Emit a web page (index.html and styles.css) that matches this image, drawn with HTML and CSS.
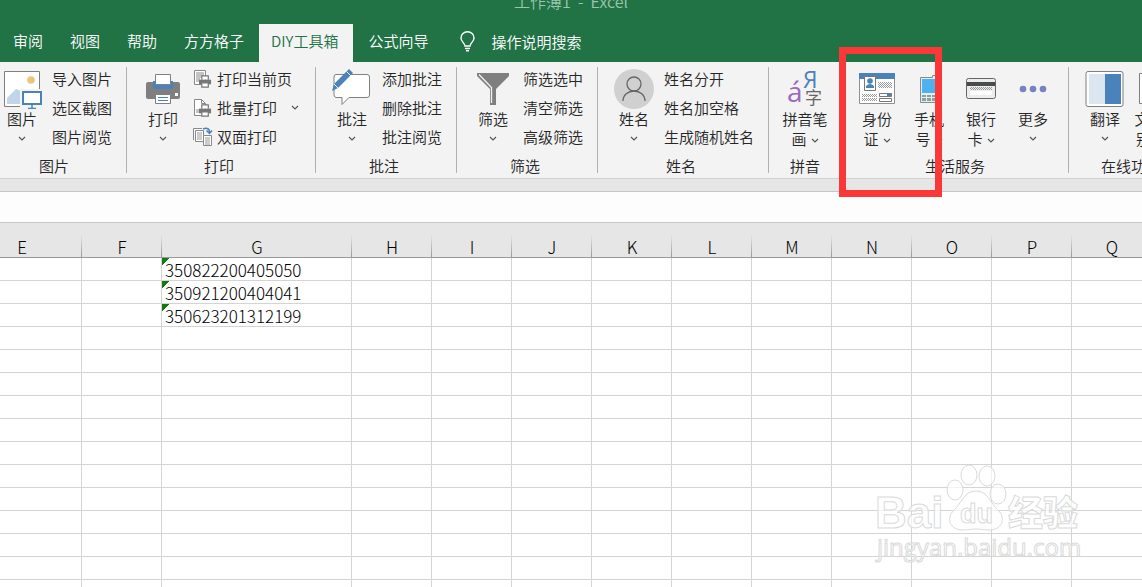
FILE: index.html
```html
<!DOCTYPE html>
<html lang="zh-CN">
<head>
  <meta charset="utf-8">
  <title>工作薄1 - Excel</title>
  <link rel="stylesheet" href="styles.css">
</head>
<body>
  <svg class="defs" width="0" height="0">
    <symbol id="chevron" viewBox="0 0 8 5"><path d="M1 1l3 3 3-3" fill="none" stroke="#555" stroke-width="1.2"/></symbol>
    <symbol id="printer" viewBox="0 0 16 14">
      <path d="M4 5V1h7v4" fill="#fff" stroke="#777" stroke-width="1.3"/>
      <path d="M1 5h13v5H1z" fill="#777"/>
      <path d="M4 8.5h7V13H4z" fill="#fff" stroke="#777" stroke-width="1.3"/>
    </symbol>
    <pattern id="dots" width="2" height="2" patternUnits="userSpaceOnUse"><path d="M0 0h1v1H0zM1 1h1v1H1z" fill="#999"/></pattern>
  </svg>

  <header class="titlebar">
    <div class="title">工作薄1 &nbsp;- &nbsp;Excel</div>
    <nav class="tabs">
      <button class="tab">审阅</button>
      <button class="tab">视图</button>
      <button class="tab">帮助</button>
      <button class="tab">方方格子</button>
      <button class="tab active">DIY工具箱</button>
      <button class="tab">公式向导</button>
      <button class="tell-me">
        <svg width="16" height="21" viewBox="0 0 16 21" fill="none" stroke="#fff" stroke-width="1.4">
          <path d="M5 15c0-3-4-4-4-8a6.5 6.2 0 0 1 13 0c0 4-4 5-4 8zM5 17.5h5M6 19.7h3"/>
        </svg>
        操作说明搜索
      </button>
    </nav>
  </header>

  <main class="ribbon">
    <section class="group">
      <div class="tools">
        <button class="big">
          <svg width="40" height="40" viewBox="0 0 40 40">
            <path d="M2.500 2.500h35v35h-35z" fill="#fff" stroke="#808080"/>
            <path d="M5 35V29l9-9 3 1 3 4v10z" fill="#c1d5e8"/>
            <circle cx="29" cy="11" r="3.800" fill="#ecc477"/>
            <path d="M18 20h22v20H18z" fill="#f3f3f3"/>
            <path d="M21 23h18v12H21z" fill="#fff" stroke="#4a82bc" stroke-width="2"/>
            <path d="M30 36v3M26 39.500h8" stroke="#4a82bc" stroke-width="1.500"/>
          </svg>
          <span>图片</span>
          <svg class="arrow"><use href="#chevron"/></svg>
        </button>
        <div class="list">
          <button>导入图片</button>
          <button>选区截图</button>
          <button>图片阅览</button>
        </div>
      </div>
      <div class="group-name">图片</div>
    </section>

    <section class="group">
      <div class="tools">
        <button class="big">
          <svg width="40" height="40" viewBox="0 0 40 40">
            <rect x="3" y="13" width="34" height="17" rx="2" fill="#7f7f7f"/>
            <path d="M10 12h20v8H10z" fill="#4a82bc"/>
            <path d="M12.500 5.500h15v10h-15z" fill="#fff" stroke="#808080"/>
            <path d="M12.500 25.500h15v9h-15z" fill="#fff" stroke="#808080"/>
            <path d="M15 28.500h10M15 31.500h10" stroke="#4a82bc"/>
            <path d="M32 24h3v3h-3z" fill="#fff"/>
          </svg>
          <span>打印</span>
          <svg class="arrow"><use href="#chevron"/></svg>
        </button>
        <div class="list">
          <button>
            <svg width="20" height="20" viewBox="0 0 20 20">
              <path d="M1.500 1.500h11v14h-11z" fill="#fff" stroke="#888"/>
              <path d="M3 4h8M3 6h8M3 8h5M3 10h4M3 12h3" stroke="#888"/>
              <use href="#printer" x="5" y="6" width="15" height="13"/>
            </svg>
            打印当前页
          </button>
          <button>
            <svg width="20" height="20" viewBox="0 0 20 20">
              <path d="M1.500 1.500h7l4 4v12h-11z" fill="#fff" stroke="#888"/>
              <path d="M8.500 1.500v4h4" fill="none" stroke="#888"/>
              <path d="M3 12h3M3 14h3" stroke="#888"/>
              <use href="#printer" x="5" y="6" width="15" height="13"/>
            </svg>
            批量打印
            <svg class="arrow side"><use href="#chevron"/></svg>
          </button>
          <button>
            <svg width="20" height="20" viewBox="0 0 20 20">
              <path d="M.5 13V1.500H9M2.500 3.500h8v11h-8z" fill="#fff" stroke="#888"/>
              <path d="M4 6h5M4 8h5M4 10h5M4 12h5" stroke="#999"/>
              <path d="M10.500 8.500h8v10h-8z" fill="#fff" stroke="#888"/>
              <path d="M12 11h5M12 13h5M12 15h5M12 17h5" stroke="#999"/>
              <path d="M10 2c4-2 7 0 6.500 4M13.500 3.500l3 3 2.500-3" fill="none" stroke="#4a82bc" stroke-width="1.500"/>
            </svg>
            双面打印
          </button>
        </div>
      </div>
      <div class="group-name">打印</div>
    </section>

    <section class="group">
      <div class="tools">
        <button class="big">
          <svg width="40" height="40" viewBox="0 0 40 40">
            <path d="M4 5.500h31q2.500 0 2.500 2.500v18q0 2.500-2.500 2.500H17l-7 7v-7H4q-2-.5-2-2.500V8q0-2.500 2-2.500z" fill="#fff" stroke="#808080"/>
            <path d="M0 22l2-7L17 0l4 4L6 19z" fill="#4a82bc"/>
            <path d="M14.500 2.500l4.500 4.500M2 15l4 4" stroke="#f3f3f3"/>
          </svg>
          <span>批注</span>
          <svg class="arrow"><use href="#chevron"/></svg>
        </button>
        <div class="list">
          <button>添加批注</button>
          <button>删除批注</button>
          <button>批注阅览</button>
        </div>
      </div>
      <div class="group-name">批注</div>
    </section>

    <section class="group">
      <div class="tools">
        <button class="big">
          <svg width="40" height="40" viewBox="0 0 40 40">
            <path d="M4 4h32v3L23 20v16h-6V20L4 7z" fill="#7f7f7f"/>
            <path d="M6 5.500L18.500 18.500V34" fill="none" stroke="#f3f3f3" stroke-width="1.300"/>
          </svg>
          <span>筛选</span>
          <svg class="arrow"><use href="#chevron"/></svg>
        </button>
        <div class="list">
          <button>筛选选中</button>
          <button>清空筛选</button>
          <button>高级筛选</button>
        </div>
      </div>
      <div class="group-name">筛选</div>
    </section>

    <section class="group">
      <div class="tools">
        <button class="big">
          <svg width="40" height="40" viewBox="0 0 40 40">
            <circle cx="20" cy="20" r="20" fill="#d0d0d0"/>
            <circle cx="20" cy="15" r="7" fill="none" stroke="#666" stroke-width="1.300"/>
            <path d="M9 32c0-6 5-10 11-10s11 4 11 10" fill="none" stroke="#666" stroke-width="1.300"/>
          </svg>
          <span>姓名</span>
          <svg class="arrow"><use href="#chevron"/></svg>
        </button>
        <div class="list">
          <button>姓名分开</button>
          <button>姓名加空格</button>
          <button>生成随机姓名</button>
        </div>
      </div>
      <div class="group-name">姓名</div>
    </section>

    <section class="group compact">
      <div class="tools">
        <button class="big">
          <svg class="glyphs" width="40" height="40" viewBox="0 0 40 40">
            <text x="2" y="33" font-size="28" fill="#9a68bd">á</text>
            <text x="18" y="19" font-size="23" fill="#4a82bc">Я</text>
            <text x="20" y="35" font-size="17" fill="#666">字</text>
          </svg>
          <span>拼音笔<br>画 <svg class="arrow"><use href="#chevron"/></svg></span>
        </button>
      </div>
      <div class="group-name">拼音</div>
    </section>

    <section class="group compact">
      <div class="tools">
        <button class="big">
          <svg width="40" height="40" viewBox="0 0 40 40">
            <path d="M2.500 4.500h35v30h-35z" fill="#fff" stroke="#909090"/>
            <path d="M2 4h36v6H2z" fill="#4a82bc"/>
            <path d="M7.500 7.500h11v14h-11z" fill="#fff" stroke="#777"/>
            <circle cx="13" cy="12" r="2.800" fill="#4a82bc"/>
            <path d="M9 19v-2q2-2 4-2t4 2v2z" fill="#4a82bc"/>
            <path d="M21 13h14v6H21zM5 25h15v3H5zM5 29h15v3H5z" fill="url(#dots)"/>
            <path d="M22.500 24.500h12v3h-12zM22.500 29.500h12v3h-12z" fill="#fff" stroke="#777"/>
            <path d="M30 25h4v2h-4z" fill="#4a82bc"/>
          </svg>
          <span>身份<br>证 <svg class="arrow"><use href="#chevron"/></svg></span>
        </button>
        <button class="big">
          <svg width="40" height="40" viewBox="0 0 40 40">
            <path d="M11.500 8.500h12v-2h3v2h2v25h-17z" fill="#e4eeee" stroke="#7c908d"/>
            <path d="M13 10h14v14H13z" fill="#4db2ee"/>
            <path d="M13 26h14v6H13z" fill="#8ca09d"/>
            <path d="M17.500 25v8M22.500 25v8M13 28.500h14" stroke="#e4eeee"/>
          </svg>
          <span>手机<br>号 <svg class="arrow"><use href="#chevron"/></svg></span>
        </button>
        <button class="big">
          <svg width="40" height="40" viewBox="0 0 40 40">
            <rect x="5.500" y="9.500" width="29" height="20" rx="2" fill="#ececec" stroke="#666"/>
            <path d="M6 13h28v4H6z" fill="#484c4c"/>
            <path d="M9 18h22v3H9z" fill="url(#dots)"/>
            <path d="M9 22h22v4H9z" fill="#fff"/>
          </svg>
          <span>银行<br>卡 <svg class="arrow"><use href="#chevron"/></svg></span>
        </button>
        <button class="big">
          <svg width="40" height="40" viewBox="0 0 40 40" fill="#7583c2">
            <circle cx="10" cy="20" r="3.300"/><circle cx="20" cy="20" r="3.300"/><circle cx="30" cy="20" r="3.300"/>
          </svg>
          <span>更多</span>
          <svg class="arrow"><use href="#chevron"/></svg>
        </button>
      </div>
      <div class="group-name">生活服务</div>
      <div class="highlight"></div>
    </section>

    <section class="group">
      <div class="tools">
        <button class="big">
          <svg width="40" height="40" viewBox="0 0 40 40">
            <rect x="1" y="2.500" width="37" height="35" rx="2" fill="#fff" stroke="#7f7f7f"/>
            <path d="M4 5h16v30H4z" fill="#dce6f0"/>
            <path d="M20 5h16v30H20z" fill="#4a82bc"/>
          </svg>
          <span>翻译</span>
          <svg class="arrow"><use href="#chevron"/></svg>
        </button>
        <button class="big">
          <svg width="40" height="40" viewBox="0 0 40 40">
            <path d="M2.500 4.500h35v30h-35z" fill="#fff" stroke="#7f7f7f"/>
          </svg>
          <span>文字识<br>别图 <svg class="arrow"><use href="#chevron"/></svg></span>
        </button>
      </div>
      <div class="group-name">在线功能</div>
    </section>
  </main>

  <div class="band"></div>
  <input class="formula" type="text" aria-label="编辑栏">

  <div class="sheet">
    <table>
      <colgroup>
        <col class="first"><col><col class="wide">
        <col><col><col><col><col><col><col><col><col><col>
      </colgroup>
      <thead>
        <tr><th>E</th><th>F</th><th>G</th><th>H</th><th>I</th><th>J</th><th>K</th><th>L</th><th>M</th><th>N</th><th>O</th><th>P</th><th>Q</th></tr>
      </thead>
      <tbody id="rows"></tbody>
    </table>
    <svg class="watermark" width="212" height="102" viewBox="0 0 212 102">
      <g class="mark">
        <text class="logo" x="1" y="65">Bai</text>
        <text class="logo-cn" x="134" y="63">经验</text>
        <ellipse cx="81" cy="27" rx="8" ry="10"/>
        <ellipse cx="95" cy="12" rx="8" ry="10"/>
        <ellipse cx="113" cy="13" rx="8" ry="10"/>
        <ellipse cx="124" cy="31" rx="8" ry="10"/>
        <path d="M102 28c12 0 14 12 22 19 9 9 3 20-8 20-6 0-8-1-14-1s-8 1-14 1c-11 0-17-11-8-20 8-7 10-19 22-19z"/>
        <text class="logo-du" x="86" y="60">du</text>
        <text class="site" x="3" y="93">jingyan.baidu.com</text>
      </g>
    </svg>
  </div>

  <script>
    // Column G holds the numbers stored as text, everything else is empty
    const values = ['350822200405050', '350921200404041', '350623201312199'];
    const rows = document.getElementById('rows');

    for (let r = 0; r < 40; r++) {
      const tr = rows.insertRow();
      for (let c = 0; c < 13; c++) {
        const td = tr.insertCell();
        if (c === 2 && values[r]) {
          td.textContent = values[r];
          td.className = 'text-number';
        }
      }
    }
  </script>
</body>
</html>
```
FILE: styles.css
```css
body {
  margin: 0;
  height: 100vh;
  display: flex;
  flex-direction: column;
  overflow: hidden;
  font-family: "Noto Sans CJK SC", sans-serif;
  font-size: 15px;
  font-weight: 350;
  color: #262626;
}
button {
  padding: 0;
  border: none;
  background: none;
  font: inherit;
  color: inherit;
  white-space: nowrap;
}
svg {
  flex: none;
}
.defs {
  position: absolute;
}

/* title and tabs */
.titlebar {
  background: #217346;
  color: #fff;
}
.title {
  height: 24px;
  font-size: 16px;
  line-height: 2px;
  text-align: center;
  color: #9cc5ad;
}
.tabs {
  display: flex;
  gap: 3px;
  height: 38px;
  padding-left: 1px;
}
.tab {
  padding: 0 12px 5px;
}
.tab.active {
  padding: 0 15px 5px 12px;
  background: #f3f3f3;
  color: #217346;
}
.tell-me {
  display: flex;
  align-items: center;
  gap: 15px;
  margin-left: 17px;
  padding-bottom: 3px;
}

/* ribbon */
.ribbon {
  display: flex;
  height: 116px;
  margin-left: -14px;
  background: #f3f3f3;
  border-bottom: 1px solid #d0d0d0;
}
.group {
  position: relative;
  flex: none;
  padding: 2px 15px 0 10px;
}
.group::after {
  content: "";
  position: absolute;
  top: 5px;
  right: 0;
  width: 1px;
  height: 106px;
  background: #b1b1b1;
}
.group.compact {
  padding: 2px 10px 0;
}
.tools {
  display: flex;
  height: 89px;
}
.group-name {
  line-height: 25px;
  text-align: center;
}
.big {
  display: flex;
  flex-direction: column;
  align-items: center;
  width: 52px;
  padding-top: 5px;
  line-height: 20px;
}
.arrow {
  width: 8px;
  height: 5px;
  margin: 7px 0;
}
.big span .arrow {
  margin: 2px 0 2px 1px;
}
.arrow.side {
  margin-left: 10px;
}
.list {
  display: flex;
  flex-direction: column;
  margin-left: 4px;
}
.list button {
  display: flex;
  align-items: center;
  gap: 4px;
  height: 29px;
}
.list .side {
  margin-right: 2px;
}
.glyphs {
  font-family: "Open Sans", "Noto Sans CJK SC", sans-serif;
  font-weight: 400;
  overflow: visible;
}
.highlight {
  position: absolute;
  z-index: 1;
  top: -15px;
  left: -2px;
  box-sizing: border-box;
  width: 103px;
  height: 150px;
  border: 7px solid #fb3737;
}

/* formula bar */
.band {
  height: 12px;
  flex: none;
  background: #e6e6e6;
  border-bottom: 1px solid #c6c6c6;
}
.formula {
  height: 30px;
  flex: none;
  box-sizing: content-box;
  padding: 0;
  border: none;
  border-bottom: 1px solid #c6c6c6;
  background: #fdfdfd;
}

/* cells */
.sheet {
  position: relative;
  flex: 1;
  min-height: 0;
  overflow: hidden;
  background: #fff;
}
table {
  table-layout: fixed;
  width: 1190px;
  margin-left: -38px;
  border-spacing: 0;
  font-size: 17px;
  font-weight: 300;
  color: #000;
}
col {
  width: 80px;
}
col.first {
  width: 120px;
}
col.wide {
  width: 190px;
}
th {
  height: 20px;
  padding: 14px 0 0;
  font-weight: 300;
  line-height: 20px;
  border-bottom: 1px solid #999;
  background: linear-gradient(#e6e6e6 35%, #999) right / 1px 100% no-repeat #e6e6e6;
}
td {
  height: 20px;
  padding: 2px 0 0 3px;
  line-height: 20px;
  border-right: 1px solid #d4d4d4;
  border-bottom: 1px solid #d4d4d4;
}
.text-number {
  background: linear-gradient(135deg, #107c10 50%, transparent 50%) 0 0 / 8px 8px no-repeat;
}

.watermark {
  position: absolute;
  top: 240px;
  right: 56px;
}
.mark {
  fill: #fff;
  fill-opacity: 0.7;
  stroke: #dadada;
}
.logo,
.logo-du {
  font-family: "Liberation Sans", sans-serif;
  font-weight: bold;
  font-size: 44px;
}
.logo-du {
  font-size: 27px;
}
.logo-cn {
  font-weight: 900;
  font-size: 35px;
}
.site {
  font-family: "Open Sans", sans-serif;
  font-weight: 400;
  font-size: 24px;
}
```
